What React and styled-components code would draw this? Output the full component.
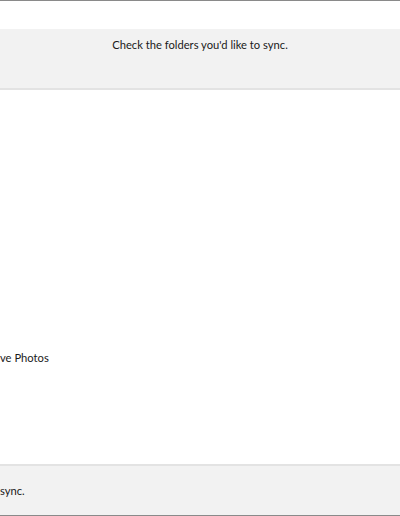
import styled, { createGlobalStyle } from "styled-components";

const Global = createGlobalStyle`
  html, body { margin: 0; padding: 0; background: #fff; }
  body { font-family: Lato, "Noto Sans", sans-serif; color: #1a1a1a; }
`;

const Frame = styled.div`
  width: 400px;
  height: 516px;
  box-sizing: border-box;
  border-top: 1px solid #8a8a8a;
  border-bottom: 1px solid #8a8a8a;
  display: flex;
  flex-direction: column;
  overflow: hidden;
`;

const TopSpace = styled.div`
  height: 28px;
  background: #fff;
`;

const Band = styled.div`
  background: #f2f2f2;
  height: ${(p) => p.$h}px;
  box-sizing: border-box;
  display: flex;
  align-items: ${(p) => (p.$top ? "flex-start" : "center")};
  justify-content: ${(p) => (p.$center ? "center" : "flex-start")};
  padding-top: ${(p) => p.$pt || 0}px;
  border-top: ${(p) => (p.$borderTop ? "2px solid #e3e3e3" : "none")};
  border-bottom: ${(p) => (p.$borderBottom ? "2px solid #e3e3e3" : "none")};
`;

const Label = styled.span`
  font-size: 11.2px;
  line-height: 16px;
  white-space: nowrap;
`;

const Body = styled.div`
  flex: 1;
  background: #fff;
  display: flex;
  flex-direction: column;
  padding-top: 260px;
`;

export default function App() {
  return (
    <>
      <Global />
      <Frame>
        <TopSpace />
        <Band $h={61} $center $top $pt={8} $borderBottom>
          <Label>Check the folders you'd like to sync.</Label>
        </Band>
        <Body>
          <Label>ve Photos</Label>
        </Body>
        <Band $h={51} $borderTop>
          <Label>sync.</Label>
        </Band>
      </Frame>
    </>
  );
}
